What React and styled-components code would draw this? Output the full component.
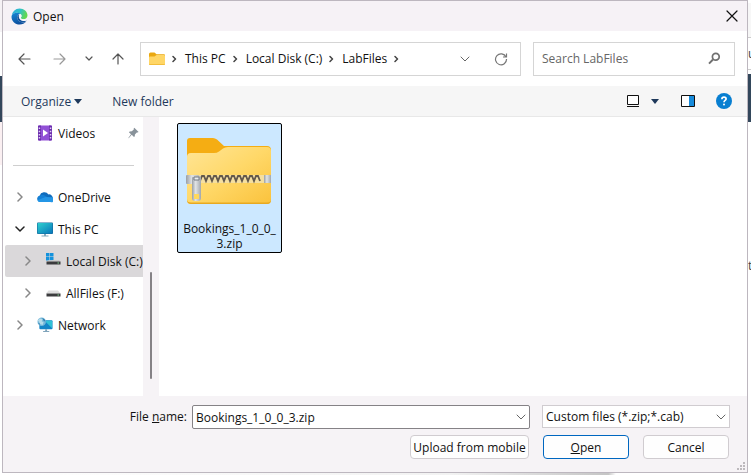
import React from "react";
import styled, { createGlobalStyle } from "styled-components";

const GlobalStyle = createGlobalStyle`
  * { box-sizing: border-box; }
  body { margin: 0; background: #fff; overflow: hidden; }
  body, button, input, select { font-family: "Open Sans", "Noto Sans", sans-serif; font-size: 12px; color: #111; }
  button, input, select { margin: 0; padding: 0; }
`;

const Page = styled.div`
  display: grid;
  grid-template-columns: 2px 1fr 3px;
  grid-template-rows: 1fr 2px;
  height: 100vh;
`;
const LeftEdge = styled.div`
  background: linear-gradient(#f5f2f5 0 32px, #fff 32px 76px, #33475b 76px 122px, #fbf0f2 122px 165px, #fff 165px);
`;
const RightEdge = styled.div`
  display: flex;
  flex-direction: column;
  overflow: hidden;
  white-space: nowrap;
  background: linear-gradient(#fff 0 3px, #f7f7f7 3px 37px, #ccc 37px 38px, #fff 38px 69px, #ccc 69px 70px, #fff 70px 74px, #33475b 74px 122px, #fff 122px);
`;
const EdgeText = styled.span`
  line-height: 16px;
  height: 16px;
  color: #444;
  margin-top: ${(p) => p.$gap}px;
`;
const BottomEdge = styled.div`
  grid-column: 1 / -1;
  background: linear-gradient(90deg, #fff, #f2f2f2 60%, #c5c5c5 81%, #fff 82%);
`;
const Dialog = styled.main`
  display: flex;
  flex-direction: column;
  min-width: 0;
  border: 1px solid #bdb7bf;
  background: #fff;
`;
const TitleBar = styled.header`
  display: flex;
  align-items: center;
  gap: 5px;
  height: 30px;
  padding: 0 8px;
  background: #f6f2f6;
`;
const Title = styled.h1`
  flex: 1;
  margin: 0;
  font-size: 12px;
  font-weight: 400;
`;
const IconButton = styled.button`
  display: flex;
  align-items: center;
  justify-content: center;
  width: ${(p) => p.$w || 16}px;
  height: 20px;
  flex: none;
  border: 0;
  background: none;
`;
const NavBar = styled.nav`
  display: flex;
  align-items: center;
  height: 55px;
  padding: 0 12px;
`;
const NavButtons = styled.div`
  display: flex;
  width: 125px;
  gap: 16px;
  flex: none;
`;
const AddressBar = styled.div`
  display: flex;
  align-items: center;
  flex: 1;
  min-width: 0;
  height: 34px;
  padding: 0 11px 0 8px;
  border: 1px solid #d5d5d5;
`;
const Crumbs = styled.div`
  display: flex;
  align-items: center;
  flex: 1;
  gap: 7px;
`;
const Crumb = styled.a`
  color: #111;
  text-decoration: none;
  white-space: nowrap;
`;
const AddressTools = styled.div`
  display: flex;
  gap: 20px;
`;
const SearchBox = styled.label`
  display: flex;
  align-items: center;
  width: 202px;
  height: 34px;
  margin-left: 12px;
  padding: 0 13px 0 8px;
  border: 1px solid #d5d5d5;
`;
const SearchInput = styled.input`
  flex: 1;
  min-width: 0;
  border: 0;
  outline: 0;
  background: none;
  &::placeholder { color: #666; opacity: 1; }
`;
const Toolbar = styled.div`
  display: flex;
  align-items: center;
  height: 31px;
  padding: 0 15px 0 18px;
  border-bottom: 1px solid #e8e8e8;
  background: #f6f6f6;
`;
const ToolbarButton = styled.button`
  display: flex;
  align-items: center;
  gap: 3px;
  margin-right: 30px;
  border: 0;
  background: none;
  color: #1e395b;
`;
const ToolbarEnd = styled.div`
  display: flex;
  align-items: center;
  margin-left: auto;
  gap: 20px;
`;
const ViewGroup = styled.div`
  display: flex;
  gap: 6px;
  margin-right: -3px;
`;
const Body = styled.div`
  display: flex;
  flex: 1;
  min-height: 0;
`;
const Sidebar = styled.aside`
  width: 140px;
  padding-left: 2px;
  overflow: hidden;
`;
const Scrollbar = styled.div`
  display: flex;
  flex-direction: column;
  justify-content: flex-end;
  align-items: center;
  width: 16px;
  padding-bottom: 17px;
  background: #f6f3f6;
`;
const Thumb = styled.div`
  width: 2px;
  height: 107px;
  border-radius: 1px;
  background: #858286;
`;
const TreeRow = styled.div`
  display: flex;
  align-items: center;
  height: 32px;
  padding-left: ${(p) => (p.$nested ? 15 : 7)}px;
  padding-right: 4px;
  gap: 9px;
  white-space: nowrap;
  border-radius: 2px 0 0 2px;
  background: ${(p) => (p.$selected ? "#dad8da" : "transparent")};
`;
const TreeItem = styled.button`
  display: flex;
  align-items: center;
  gap: 5px;
  border: 0;
  background: none;
  white-space: nowrap;
`;
const TreeSpacer = styled.span`
  width: 16px;
`;
const PinSlot = styled.span`
  display: flex;
  margin-left: auto;
`;
const Divider = styled.hr`
  height: 1px;
  margin: 16px 9px 15px 8px;
  border: 0;
  background: #cfcfcf;
`;
const Files = styled.section`
  flex: 1;
  padding: 6px 18px;
`;
const FileTile = styled.button`
  display: flex;
  flex-direction: column;
  align-items: center;
  width: 105px;
  padding: 13px 8px 1px;
  border: 1px solid #000;
  border-radius: 2px;
  background: #cce8ff;
`;
const FileName = styled.span`
  margin-top: 16px;
  line-height: 15px;
`;
const Footer = styled.form`
  display: flex;
  flex-direction: column;
  gap: 6px;
  height: 76px;
  padding: 9px 17px 0 0;
  background: #f6f3f6;
  position: relative;
`;
const FieldRow = styled.div`
  display: grid;
  grid-template-columns: 189px 1fr 188px;
`;
const FieldLabel = styled.label`
  padding-right: 5px;
  text-align: right;
  line-height: 24px;
`;
const Combo = styled.div`
  display: flex;
  align-items: center;
  height: 24px;
  margin-right: 12px;
  padding: 0 3px;
  border: 1px solid #858286;
  border-radius: 2px;
  background: #fff;
`;
const ComboInput = styled.input`
  flex: 1;
  min-width: 0;
  border: 0;
  outline: 0;
  background: none;
`;
const SelectBox = styled.div`
  display: grid;
  align-items: center;
  height: 23px;
  border: 1px solid #d0ccd0;
  background: #fff;
  & > * { grid-area: 1 / 1; }
  & > svg { justify-self: end; margin-right: 3px; pointer-events: none; }
`;
const TypeSelect = styled.select`
  appearance: none;
  width: 100%;
  height: 21px;
  padding: 0 18px 0 3px;
  border: 0;
  outline: 0;
  background: #fff;
`;
const Actions = styled.div`
  display: flex;
  justify-content: flex-end;
  gap: 14px;
  padding-right: 1px;
`;
const Action = styled.button`
  width: ${(p) => (p.$wide ? 119 : 86)}px;
  height: 24px;
  border: 1px solid ${(p) => (p.$primary ? "#0067c0" : "#d0ccd0")};
  border-radius: 4px;
  background: #fefefe;
`;
const Grip = styled.svg`
  position: absolute;
  right: 2px;
  bottom: 2px;
`;

const Line = ({ w, h, d, color = "#555", sw = 1.2 }) => (
  <svg width={w} height={h} viewBox={`0 0 ${w} ${h}`} fill="none" stroke={color} strokeWidth={sw} strokeLinecap="round" strokeLinejoin="round">
    <path d={d} />
  </svg>
);
const ComboChevron = () => <Line w={10} h={6} d="M1 1l4 4 4-4" color="#666" sw={1} />;
const CrumbChevron = () => <Line w={6} h={8} d="M1 1.500l2.500 2.500-2.500 2.500" color="#444" sw={1.5} />;
const Caret = () => (
  <svg width="8" height="5" viewBox="0 0 8 5"><path d="M0 0h8L4 5z" fill="#1e395b" /></svg>
);

const EdgeIcon = () => (
  <svg width="17" height="17" viewBox="0 0 17 17">
    <defs>
      <linearGradient id="edgeTop" x1="0" y1="0" x2="1" y2="0.3"><stop offset="0" stopColor="#2ba8e0" /><stop offset=".55" stopColor="#2fc2c8" /><stop offset="1" stopColor="#62d84e" /></linearGradient>
      <linearGradient id="edgeLow" x1="0" y1="0" x2="0.4" y2="1"><stop offset="0" stopColor="#1689d6" /><stop offset="1" stopColor="#0c4f9e" /></linearGradient>
    </defs>
    <path d="M.6 8A8 8 0 0 1 8.500 .5C13 .5 16.500 3.500 16.500 7.300c0 2.500-1.900 4-4.100 4-1.800 0-2.700-.6-2.700-1.200s.8-.9.800-2.100C10.500 6 8.500 4.700 6 4.700 3.500 4.700 1.300 6 .6 8z" fill="url(#edgeTop)" />
    <path d="M.5 8.500C.8 6 3.200 4.700 6 4.700c1.500 0 2.800.4 3.600 1.200C7.500 5.800 6.200 7.500 6.200 9.300c0 3 2.800 5.200 5.800 5.200 1.300 0 2.300-.4 3.200-.9-1.500 1.900-3.900 3-6.500 3C4 16.600.4 13 .5 8.500z" fill="url(#edgeLow)" />
    <path d="M6.200 9.300c0 3 2.800 5.200 5.800 5.200 1.500 0 3-.8 3.700-1.900-1.300.6-3.100.7-4.600 0C9.100 11.800 7.400 9.800 8 6.800 6.900 7.200 6.200 8.200 6.200 9.300z" fill="#11549d" />
    <path d="M8 7.200C7.300 9.500 8.900 12 11.400 12.700c1.700.5 3.400.2 4.400-.8.300-.4.300-.8.200-1.100-1 .5-2.200.6-3.600.5-1.800 0-2.700-.6-2.700-1.200s.8-.9.800-2.100c0-.9-.4-1.500-1-1.700-.7.100-1.200.4-1.500.9z" fill="#f5f5f7" />
  </svg>
);
const FolderIcon = () => (
  <svg width="16" height="14" viewBox="0 0 16 14">
    <path d="M0 2Q0 .5 1.500 .5H5.500L7.500 2.300H15Q16 2.300 16 3.300V11H0z" fill="#eaa811" />
    <path d="M0 5.500Q0 4.500 1 4.500H5.500L7.500 3H15Q16 3 16 4V12Q16 13 15 13H1Q0 13 0 12z" fill="#ffd666" />
    <path d="M0 11.500V12Q0 13 1 13H15Q16 13 16 12V11.500Q16 12.300 15 12.300H1Q0 12.300 0 11.500z" fill="#efb72f" />
  </svg>
);
const RefreshIcon = () => (
  <svg width="14" height="14" viewBox="0 0 14 14" fill="none" stroke="#777" strokeWidth="1.200">
    <path d="M12 5A5.500 5.500 0 1 0 12.500 7M12.500 1.500V5H9" />
  </svg>
);
const SearchIcon = () => (
  <svg width="13" height="13" viewBox="0 0 13 13" fill="none" stroke="#707070">
    <circle cx="7.800" cy="4.800" r="3.400" strokeWidth="1.700" /><path d="M5 7.500L1 11.600" strokeWidth="2" />
  </svg>
);
const ViewIcon = () => (
  <svg width="12" height="12" viewBox="0 0 12 12">
    <path d="M.5 .5H11.500V9.500H.5z" fill="#fff" stroke="#111" /><path d="M0 11.500H12" stroke="#111" />
  </svg>
);
const PaneIcon = () => (
  <svg width="14" height="12" viewBox="0 0 14 12">
    <path d="M.5 .5H13.500V11.500H.5z" fill="#fff" stroke="#111" /><path d="M8 1h5v10H8z" fill="#168bdb" />
  </svg>
);
const HelpIcon = () => (
  <svg width="16" height="16" viewBox="0 0 16 16">
    <circle cx="8" cy="8" r="8" fill="#087fd1" />
    <path d="M5.900 6.200C5.900 4.800 6.800 4.200 8 4.200s2.100.7 2.100 1.800C10.100 7.400 8 7.500 8 9.200" fill="none" stroke="#fff" strokeWidth="1.700" />
    <circle cx="8" cy="11.400" r="1" fill="#fff" />
  </svg>
);
const VideosIcon = () => (
  <svg width="16" height="16" viewBox="0 0 16 16">
    <rect x="1" y=".5" width="14" height="15" rx="1" fill="#9150d6" />
    <path d="M1 1.500Q1 .5 2 .5H4V15.500H2Q1 15.500 1 14.500zM12 .5h2q1 0 1 1v13q0 1-1 1h-2z" fill="#6c2dae" />
    <path d="M1.700 2.500h1.500v1.500H1.700zM1.700 5.700h1.500v1.500H1.700zM1.700 8.900h1.500v1.500H1.700zM1.700 12.100h1.500v1.500H1.700zM12.800 2.500h1.500v1.500h-1.500zM12.800 5.700h1.500v1.500h-1.500zM12.800 8.900h1.500v1.500h-1.500zM12.800 12.100h1.500v1.500h-1.500z" fill="#ded0f4" />
    <path d="M6 4.500l5 3.500-5 3.500z" fill="#fff" />
  </svg>
);
const PinIcon = () => (
  <svg width="11" height="12" viewBox="0 0 11 12">
    <path d="M6.300 .7L10.600 5 9.500 5.600 8.800 5.500 6.900 7.500 6.800 9.300 6 10 3.700 7.800 .7 11.300.3 11 3 7.200.9 5.200 1.700 4.400 3.800 4.300 5.800 2.400 5.700 1.500z" fill="#88929a" />
  </svg>
);
const CloudIcon = () => (
  <svg width="16" height="16" viewBox="0 0 16 16">
    <path d="M3 13A3.200 3.200 0 0 1 2.600 6.800 5 5 0 0 1 11.500 5.400 3.800 3.800 0 0 1 15.800 9.500L9 13z" fill="#0f6cbd" />
    <path d="M2.600 6.800A5 5 0 0 1 6.800 6L13.500 10l-4 3H3A3.200 3.200 0 0 1 2.600 6.800z" fill="#1480d6" />
    <path d="M3 13C1.700 13 .8 12.200.4 11.200L8.500 8l6.800.2A2.500 2.500 0 0 1 13.400 13z" fill="#2496e6" />
  </svg>
);
const MonitorIcon = () => (
  <svg width="16" height="16" viewBox="0 0 16 16">
    <defs><linearGradient id="screen" x2="1" y2="1"><stop stopColor="#2fd0cf" /><stop offset="1" stopColor="#0877bb" /></linearGradient></defs>
    <rect x="0" y="1.500" width="16" height="11.500" rx="1" fill="#15699d" />
    <rect x=".6" y="2" width="14.800" height="10.400" rx=".5" fill="url(#screen)" />
    <path d="M7 13h2v1.500h2.500v1h-7v-1H7z" fill="#82a7bb" />
  </svg>
);
const DiskIcon = ({ windows }) => (
  <svg width="16" height="16" viewBox="0 0 16 16">
    {windows && <path d="M1 0h3.500v3.500H1zM5 0h3.500v3.500H5zM1 4h3.500v3.500H1zM5 4h3.500v3.500H5z" fill="#1492dc" />}
    {windows ? <path d="M9 7H14L15.500 8.500H2L3 7.500z" fill="#cacaca" /> : <path d="M3.500 5.500H13L15.500 8.500H1z" fill="#dedede" />}
    <path d="M1.500 8.500H15.500V11.500H1.500z" fill="#3b3b3d" />
    <path d="M12.500 9.500h1.500v1h-1.500z" fill="#83d894" />
  </svg>
);
const NetworkIcon = () => (
  <svg width="16" height="16" viewBox="0 0 17 17">
    <rect x="2.500" y="3.500" width="14" height="9.500" rx="1" fill="#1485c7" />
    <path d="M8 4h8v8z" fill="#31c1d6" /><path d="M8.700 13h2v2H13v1H6.500v-1h2.200z" fill="#80a4bb" />
    <circle cx="5" cy="5" r="4.500" fill="#76b8da" />
    <path d="M3 1.500l3 1-1 2 2 1-1 3-3-1L2.200 5 .7 4z" fill="#b5dcea" /><path d="M5.500 1L8 2.500 9 5 7 4zM1 6l2 1v1.500z" fill="#327fae" />
  </svg>
);
const ZipFolder = () => (
  <svg width="86" height="68" viewBox="1 0 86 68" overflow="visible">
    <defs>
      <linearGradient id="zipFolder" x2="1" y2="1"><stop stopColor="#ffe596" /><stop offset=".5" stopColor="#ffd868" /><stop offset="1" stopColor="#fac23c" /></linearGradient>
      <linearGradient id="zipMetal" x2="1" y2="0"><stop stopColor="#9a9fa5" /><stop offset=".4" stopColor="#e1e4e6" /><stop offset="1" stopColor="#a2a7ac" /></linearGradient>
    </defs>
    <path d="M1 4Q1 1 4 1H27Q29 1 31 2.500L38 9H81Q85 9 85 13V40H1z" fill="#f5ad13" />
    <path d="M1 20Q1 16 5 16H28Q31 16 33 14.500L37 11.500Q39 10 42 10H81Q85 10 85 14V63Q85 67 81 67H5Q1 67 1 63z" fill="url(#zipFolder)" />
    <path d="M1 62V63Q1 67 5 67H81Q85 67 85 63V62Q85 65.500 81 65.500H5Q1 65.500 1 62z" fill="#e8a921" />
    <path d="M13 38H80V46H13z" fill="#f5dfa0" />
    <path d="M14 44L16 39h2l2 5 2-5h2l2 5 2-5h2l2 5 2-5h2l2 5 2-5h2l2 5 2-5h2l2 5 2-5h2l2 5 2-5h2l2 5 2-5h2l2 5 2-5h2l2 5" fill="none" stroke="#62584b" strokeWidth="1.800" />
    <path d="M78 38h7v8h-7z" fill="url(#zipMetal)" />
    <path d="M0 39Q0 38 1 38H12L15 40V45L12 47H1Q0 47 0 46z" fill="url(#zipMetal)" />
    <path d="M6 41Q6 40 7 40H14Q15 40 15 42V61Q15 64 12 64H9Q6 64 6 61z" fill="url(#zipMetal)" />
    <path d="M8 57h5v5H8z" fill="#ffd85c" /><path d="M8 40h5v3H8z" fill="#e9edef" stroke="#747b82" />
  </svg>
);

const places = [
  { name: "OneDrive", icon: <CloudIcon /> },
  { name: "This PC", icon: <MonitorIcon />, open: true },
  { name: "Local Disk (C:)", icon: <DiskIcon windows />, nested: true, selected: true },
  { name: "AllFiles (F:)", icon: <DiskIcon />, nested: true },
  { name: "Network", icon: <NetworkIcon /> },
];
const gripDots = [[6, 0], [3, 3], [6, 3], [0, 6], [3, 6], [6, 6]];

export default function App() {
  return (
    <Page>
      <GlobalStyle />
      <LeftEdge />
      <Dialog>
        <TitleBar>
          <EdgeIcon />
          <Title>Open</Title>
          <IconButton $w={14} aria-label="Close"><Line w={12} h={12} d="M1 1l10 10M11 1L1 11" color="#111" /></IconButton>
        </TitleBar>
        <NavBar>
          <NavButtons>
            <IconButton $w={18} aria-label="Back"><Line w={13} h={12} d="M12 6H1M6 1L1 6l5 5" /></IconButton>
            <IconButton $w={20} aria-label="Forward"><Line w={13} h={12} d="M1 6h11M7 1l5 5-5 5" color="#999" /></IconButton>
            <IconButton $w={8} aria-label="Recent locations"><Line w={8} h={6} d="M1 1l3 3 3-3" /></IconButton>
            <IconButton $w={18} aria-label="Up"><Line w={12} h={12} d="M6 11V1M1 6l5-5 5 5" /></IconButton>
          </NavButtons>
          <AddressBar>
            <Crumbs>
              <FolderIcon />
              <CrumbChevron />
              <Crumb href="#pc">This PC</Crumb>
              <CrumbChevron />
              <Crumb href="#disk">Local Disk (C:)</Crumb>
              <CrumbChevron />
              <Crumb href="#labfiles">LabFiles</Crumb>
              <CrumbChevron />
            </Crumbs>
            <AddressTools>
              <IconButton aria-label="Previous locations"><ComboChevron /></IconButton>
              <IconButton aria-label="Refresh"><RefreshIcon /></IconButton>
            </AddressTools>
          </AddressBar>
          <SearchBox>
            <SearchInput aria-label="Search LabFiles" placeholder="Search LabFiles" />
            <SearchIcon />
          </SearchBox>
        </NavBar>
        <Toolbar>
          <ToolbarButton>Organize <Caret /></ToolbarButton>
          <ToolbarButton>New folder</ToolbarButton>
          <ToolbarEnd>
            <ViewGroup>
              <IconButton aria-label="Change view"><ViewIcon /></IconButton>
              <IconButton aria-label="More views"><Caret /></IconButton>
            </ViewGroup>
            <IconButton aria-label="Preview pane"><PaneIcon /></IconButton>
            <IconButton aria-label="Help"><HelpIcon /></IconButton>
          </ToolbarEnd>
        </Toolbar>
        <Body>
          <Sidebar>
            <TreeRow>
              <TreeSpacer />
              <TreeItem><VideosIcon />Videos</TreeItem>
              <PinSlot><PinIcon /></PinSlot>
            </TreeRow>
            <Divider />
            {places.map((p) => (
              <TreeRow key={p.name} $nested={p.nested} $selected={p.selected}>
                <IconButton aria-label={`Expand ${p.name}`}>
                  {p.open ? <Line w={10} h={6} d="M1 1l4 4 4-4" color="#222" sw={1.5} /> : <Line w={6} h={10} d="M1 1l4 4-4 4" color="#888" sw={1.5} />}
                </IconButton>
                <TreeItem>{p.icon}{p.name}</TreeItem>
              </TreeRow>
            ))}
          </Sidebar>
          <Scrollbar><Thumb /></Scrollbar>
          <Files>
            <FileTile>
              <ZipFolder />
              <FileName>Bookings_1_0_0_<br />3.zip</FileName>
            </FileTile>
          </Files>
        </Body>
        <Footer onSubmit={(e) => e.preventDefault()}>
          <FieldRow>
            <FieldLabel htmlFor="file-name">File <u>n</u>ame:</FieldLabel>
            <Combo>
              <ComboInput id="file-name" defaultValue="Bookings_1_0_0_3.zip" />
              <ComboChevron />
            </Combo>
            <SelectBox>
              <TypeSelect aria-label="File type"><option>Custom files (*.zip;*.cab)</option></TypeSelect>
              <ComboChevron />
            </SelectBox>
          </FieldRow>
          <Actions>
            <Action type="button" $wide>Upload from mobile</Action>
            <Action $primary><u>O</u>pen</Action>
            <Action type="button">Cancel</Action>
          </Actions>
          <Grip width="8" height="8" viewBox="0 0 8 8">
            {gripDots.map(([x, y]) => <rect key={`${x}-${y}`} x={x} y={y} width="2" height="2" fill="#bdb9bd" />)}
          </Grip>
        </Footer>
      </Dialog>
      <RightEdge>
        <EdgeText $gap={46}>u</EdgeText>
        <EdgeText $gap={196}>t</EdgeText>
      </RightEdge>
      <BottomEdge />
    </Page>
  );
}
